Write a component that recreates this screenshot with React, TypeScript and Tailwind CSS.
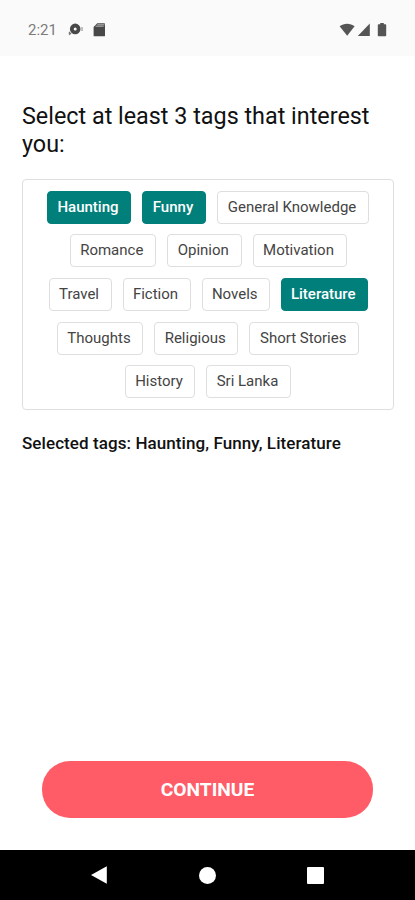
import React, { useState } from "react";
import clsx from "clsx";

interface Tag {
  label: string;
  width: string;
}

const TAG_ROWS: Tag[][] = [
  [
    { label: "Haunting", width: "w-[84px]" },
    { label: "Funny", width: "w-[64px]" },
    { label: "General Knowledge", width: "w-[152px]" },
  ],
  [
    { label: "Romance", width: "w-[86.5px]" },
    { label: "Opinion", width: "w-[74.5px]" },
    { label: "Motivation", width: "w-[94px]" },
  ],
  [
    { label: "Travel", width: "w-[63px]" },
    { label: "Fiction", width: "w-[68px]" },
    { label: "Novels", width: "w-[68.5px]" },
    { label: "Literature", width: "w-[86.5px]" },
  ],
  [
    { label: "Thoughts", width: "w-[86.5px]" },
    { label: "Religious", width: "w-[84px]" },
    { label: "Short Stories", width: "w-[110px]" },
  ],
  [
    { label: "History", width: "w-[70px]" },
    { label: "Sri Lanka", width: "w-[85px]" },
  ],
];

const StatusBar = () => (
  <header className="flex h-14 items-center justify-between bg-[#fafafa] pt-1 pr-[28px] pl-[28px] text-[#555]">
    <div className="flex items-center">
      <span className="w-[40px] text-[15px] text-[#7c7c7c]">2:21</span>
      <svg width="15" height="14" viewBox="0 0 15 14" fill="none">
        <circle cx="7.2" cy="5.9" r="3.4" stroke="#484848" strokeWidth="3.8" />
        <path d="M1.4 8.8v3M3.2 9.6 1.4 11.8" stroke="#777" strokeWidth="1.2" />
        <path d="M14 4v4" stroke="#999" strokeWidth="1.2" />
      </svg>
      <svg className="ml-[10px]" width="13" height="14" viewBox="0 0 13 14">
        <path
          d="M4.3.2h6.8c.5 0 .9.4.9.9v11.3c0 .5-.4.9-.9.9H1.5c-.5 0-.9-.4-.9-.9V4z"
          fill="#484848"
        />
        <path d="M4.2 1.8h7.3M2.6 3.2h8" stroke="#b5b5b5" strokeWidth="1" />
      </svg>
    </div>
    <div className="flex items-center">
      <svg width="16" height="14" viewBox="0 0 16 14" fill="currentColor">
        <path d="M.6 3.2C4.8-.2 11.4-.2 15.6 3.2L8.2 12.8z" />
      </svg>
      <svg
        className="ml-[2px]"
        width="13"
        height="14"
        viewBox="0 0 13 14"
        fill="currentColor"
      >
        <path d="M12.8.5V13H.8z" />
      </svg>
      <svg
        className="ml-[7px]"
        width="10"
        height="14"
        viewBox="0 0 10 14"
        fill="currentColor"
      >
        <path d="M3.2 0h3.6v1.3h1.7c.4 0 .7.3.7.7v10.5c0 .4-.3.7-.7.7h-7c-.4 0-.7-.3-.7-.7V2c0-.4.3-.7.7-.7h1.7z" />
      </svg>
    </div>
  </header>
);

const NavigationBar = () => (
  <nav className="flex h-[50px] items-center justify-between bg-black pr-[91px] pl-[90px] text-white">
    <svg width="17" height="18" viewBox="0 0 17 18" fill="currentColor">
      <path d="M1 9 16.8.2v17.6z" />
    </svg>
    <div className="size-[17px] rounded-full bg-white" />
    <div className="size-[17px] rounded-[1px] bg-white" />
  </nav>
);

export default function App() {
  const [selected, setSelected] = useState<string[]>([
    "Haunting",
    "Funny",
    "Literature",
  ]);

  const toggle = (label: string) =>
    setSelected((prev) =>
      prev.includes(label) ? prev.filter((t) => t !== label) : [...prev, label],
    );

  return (
    <div className="flex h-[900px] w-[415px] flex-col bg-white font-['Roboto',sans-serif]">
      <StatusBar />
      <main className="flex flex-1 flex-col px-[22px] pt-[46px]">
        <h1 className="text-[23.35px] leading-7 font-normal text-[#111]">
          Select at least 3 tags that interest you:
        </h1>
        <div className="mt-[21px] flex h-[231px] w-[372px] flex-col gap-[10.7px] rounded border border-[#dedede] pt-[10.6px]">
          {TAG_ROWS.map((row) => (
            <div key={row[0].label} className="flex justify-center gap-[11px]">
              {row.map(({ label, width }) => (
                <button
                  key={label}
                  onClick={() => toggle(label)}
                  className={clsx(
                    "h-[33px] shrink-0 rounded-[4px] border pr-[2px] text-[15px] leading-[31px] whitespace-nowrap",
                    width,
                    selected.includes(label)
                      ? "border-[#007f7b] bg-[#007f7b] font-medium text-white"
                      : "border-[#dedede] bg-white text-[#444]",
                  )}
                >
                  {label}
                </button>
              ))}
            </div>
          ))}
        </div>
        <p className="mt-[23px] text-[17px] leading-5 font-medium tracking-[0.08px] text-[#111]">
          Selected tags: {selected.join(", ")}
        </p>
        <button className="mx-5 mt-auto mb-[32px] h-[57px] rounded-[28px] bg-[#ff5c67] pt-[2px] text-[19.2px] font-bold text-white">
          CONTINUE
        </button>
      </main>
      <NavigationBar />
    </div>
  );
}
